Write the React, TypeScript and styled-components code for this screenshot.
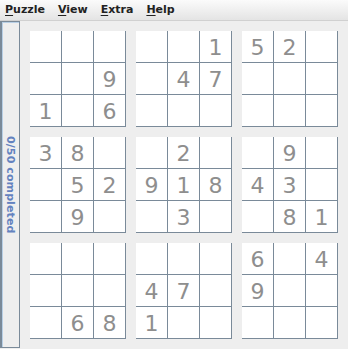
import React from "react";
import styled, { createGlobalStyle } from "styled-components";

const GlobalStyle = createGlobalStyle`
  html, body {
    margin: 0;
    padding: 0;
    background: #eeeeee;
    font-family: "DejaVu Sans", sans-serif;
  }
`;

const Window = styled.div`
  width: 348px;
  height: 349px;
  display: flex;
  flex-direction: column;
  background: #eeeeee;
  overflow: hidden;
`;

const MenuBar = styled.div`
  height: 20px;
  display: flex;
  align-items: center;
  background: linear-gradient(#fbfbfb, #e4e4e4);
  border-bottom: 1px solid #d0d0d0;
`;

const MenuItem = styled.div`
  padding: 0 6px 0 5px;
  margin-right: 2px;
  font-size: 11px;
  font-weight: bold;
  color: #222;
  line-height: 20px;
`;

const Mnemonic = styled.span`
  text-decoration: underline;
  text-underline-offset: 2px;
`;

const Body = styled.div`
  flex: 1;
  display: flex;
  min-height: 0;
`;

const Sidebar = styled.div`
  width: 17px;
  height: 325px;
  border: 1px solid #7a8a99;
  border-left-width: 2px;
  box-shadow: inset 1px 1px 0 #b8cfe5;
  display: flex;
  align-items: center;
  justify-content: center;
`;

const Progress = styled.span`
  writing-mode: vertical-rl;
  font-size: 11px;
  font-weight: bold;
  color: #6382bf;
  letter-spacing: 0.1px;
`;

const Board = styled.div`
  padding: 10px 0 0 10px;
  display: grid;
  grid-template-columns: repeat(3, 96px);
  grid-auto-rows: 96px;
  gap: 10px;
  align-content: start;
`;

const Box = styled.div`
  display: grid;
  grid-template-columns: repeat(3, 32px);
  grid-auto-rows: 32px;
`;

const Cell = styled.div`
  background: #ffffff;
  border-right: 1px solid #7a8a99;
  border-bottom: 1px solid #7a8a99;
  display: flex;
  align-items: center;
  justify-content: center;
  font-size: 22px;
  color: #8e8e8e;
  line-height: 1;
  padding-top: 2px;
  box-sizing: border-box;
`;

const boxes = [
  "000009106",
  "001047000",
  "520000000",
  "380052090",
  "020918030",
  "090430081",
  "000000068",
  "000470100",
  "604900000",
];

const menus = [
  ["P", "uzzle"],
  ["V", "iew"],
  ["E", "xtra"],
  ["H", "elp"],
];

const App: React.FC = () => {
  return (
    <React.Fragment>
      <GlobalStyle />
      <Window>
        <MenuBar>
          {menus.map(([first, rest]) => (
            <MenuItem key={first}>
              <Mnemonic>{first}</Mnemonic>
              {rest}
            </MenuItem>
          ))}
        </MenuBar>
        <Body>
          <Sidebar>
            <Progress>0/50 completed</Progress>
          </Sidebar>
          <Board>
            {boxes.map((box, i) => (
              <Box key={i}>
                {box.split("").map((d, j) => (
                  <Cell key={j}>{d === "0" ? "" : d}</Cell>
                ))}
              </Box>
            ))}
          </Board>
        </Body>
      </Window>
    </React.Fragment>
  );
};

export default App;
